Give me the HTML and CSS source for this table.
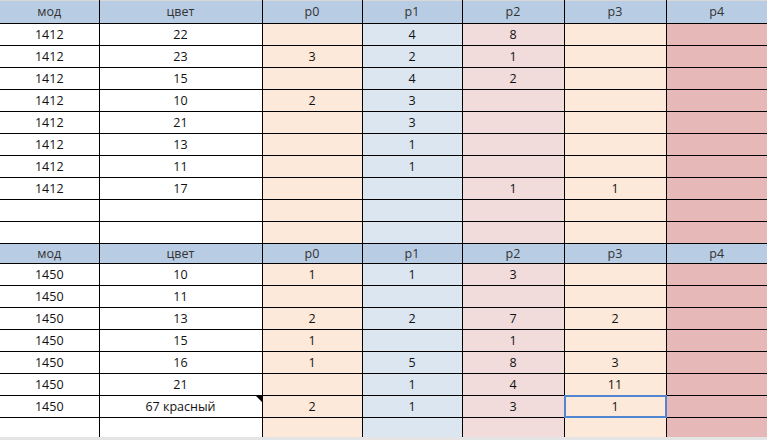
FILE: index.html
```html
<!DOCTYPE html>
<html>
<head>
<meta charset="utf-8">
<link rel="stylesheet" href="styles.css">
</head>
<body>
<table class="sheet">
<colgroup>
<col class="c-mod"><col class="c-color"><col class="c-p0"><col class="c-p1"><col class="c-p2"><col class="c-p3"><col class="c-p4">
</colgroup>
<tbody>
<tr class="head first"><td>мод</td><td>цвет</td><td>p0</td><td>p1</td><td>p2</td><td>p3</td><td>p4</td></tr>
<tr><td>1412</td><td>22</td><td class="p0"></td><td class="p1">4</td><td class="p2">8</td><td class="p3"></td><td class="p4"></td></tr>
<tr><td>1412</td><td>23</td><td class="p0">3</td><td class="p1">2</td><td class="p2">1</td><td class="p3"></td><td class="p4"></td></tr>
<tr><td>1412</td><td>15</td><td class="p0"></td><td class="p1">4</td><td class="p2">2</td><td class="p3"></td><td class="p4"></td></tr>
<tr><td>1412</td><td>10</td><td class="p0">2</td><td class="p1">3</td><td class="p2"></td><td class="p3"></td><td class="p4"></td></tr>
<tr><td>1412</td><td>21</td><td class="p0"></td><td class="p1">3</td><td class="p2"></td><td class="p3"></td><td class="p4"></td></tr>
<tr><td>1412</td><td>13</td><td class="p0"></td><td class="p1">1</td><td class="p2"></td><td class="p3"></td><td class="p4"></td></tr>
<tr><td>1412</td><td>11</td><td class="p0"></td><td class="p1">1</td><td class="p2"></td><td class="p3"></td><td class="p4"></td></tr>
<tr><td>1412</td><td>17</td><td class="p0"></td><td class="p1"></td><td class="p2">1</td><td class="p3">1</td><td class="p4"></td></tr>
<tr><td></td><td></td><td class="p0"></td><td class="p1"></td><td class="p2"></td><td class="p3"></td><td class="p4"></td></tr>
<tr><td></td><td></td><td class="p0"></td><td class="p1"></td><td class="p2"></td><td class="p3"></td><td class="p4"></td></tr>
<tr class="head second"><td>мод</td><td>цвет</td><td>p0</td><td>p1</td><td>p2</td><td>p3</td><td>p4</td></tr>
<tr><td>1450</td><td>10</td><td class="p0">1</td><td class="p1">1</td><td class="p2">3</td><td class="p3"></td><td class="p4"></td></tr>
<tr><td>1450</td><td>11</td><td class="p0"></td><td class="p1"></td><td class="p2"></td><td class="p3"></td><td class="p4"></td></tr>
<tr><td>1450</td><td>13</td><td class="p0">2</td><td class="p1">2</td><td class="p2">7</td><td class="p3">2</td><td class="p4"></td></tr>
<tr><td>1450</td><td>15</td><td class="p0">1</td><td class="p1"></td><td class="p2">1</td><td class="p3"></td><td class="p4"></td></tr>
<tr><td>1450</td><td>16</td><td class="p0">1</td><td class="p1">5</td><td class="p2">8</td><td class="p3">3</td><td class="p4"></td></tr>
<tr><td>1450</td><td>21</td><td class="p0"></td><td class="p1">1</td><td class="p2">4</td><td class="p3">11</td><td class="p4"></td></tr>
<tr><td>1450</td><td class="note">67 красный<span class="tri"></span></td><td class="p0">2</td><td class="p1">1</td><td class="p2">3</td><td class="p3 sel"><span class="selbox"></span>1</td><td class="p4"></td></tr>
<tr class="last"><td></td><td></td><td class="p0"></td><td class="p1"></td><td class="p2"></td><td class="p3"></td><td class="p4"></td></tr>
</tbody>
</table>
</body>
</html>
```
FILE: styles.css
```css
html, body {
  margin: 0;
  padding: 0;
  background: #e4e4e4;
  overflow: hidden;
}
.sheet {
  border-collapse: collapse;
  table-layout: fixed;
  width: 767px;
  font-family: "Open Sans", "Liberation Sans", sans-serif;
  font-size: 12.5px;
  color: #111;
  background: #fff;
}
.c-mod { width: 99px; }
.c-color { width: 163px; }
.c-p0 { width: 100px; }
.c-p1 { width: 100px; }
.c-p2 { width: 102px; }
.c-p3 { width: 102px; }
.c-p4 { width: 101px; }
.sheet td {
  border: 1px solid #000;
  height: 21px;
  padding: 0;
  text-align: center;
  vertical-align: middle;
  line-height: 14px;
}
.sheet tr td:first-child { border-left: none; }
.sheet tr td:last-child { border-right: none; }
.sheet tr.first td { border-top: 1px solid #d8d8d8; height: 22px; }
.sheet tr.second td { height: 19px; }
.sheet tr.head td { background: #b8cce4; color: #333; }
.sheet tr.last td { border-bottom: none; height: 19px; }
.p0 { background: #fde9d9; }
.p1 { background: #dce6f1; }
.p2 { background: #f2dcdb; }
.p3 { background: #fde9d9; }
.p4 { background: #e6b8b7; }
.note, .sel { position: relative; }
.tri {
  position: absolute;
  top: 0;
  right: 0;
  width: 0;
  height: 0;
  border-top: 6px solid #000;
  border-left: 6px solid transparent;
}
.selbox {
  position: absolute;
  left: -1px;
  top: -1px;
  right: -1px;
  bottom: -1px;
  border: 2px solid #4f86cf;
}
```
